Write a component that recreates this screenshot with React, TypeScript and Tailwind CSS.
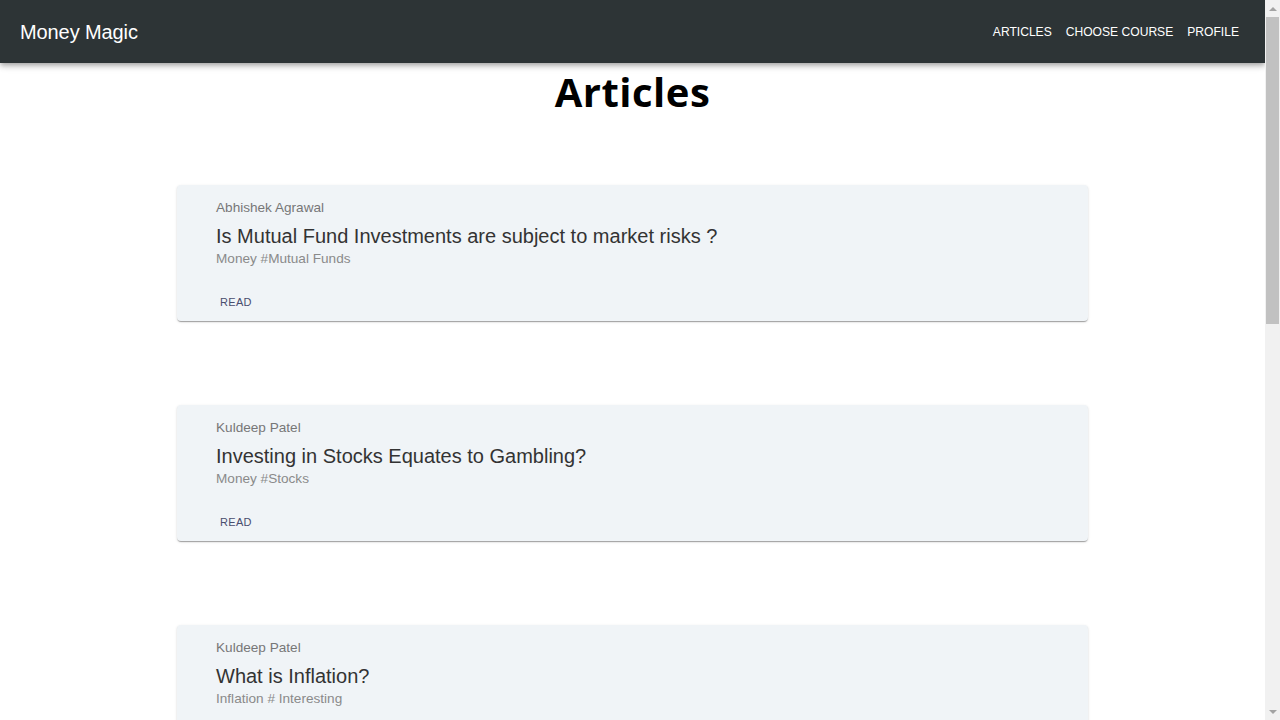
import React from 'react';

interface Article {
  id: number;
  author: string;
  title: string;
  tags: string;
}

const articles: Article[] = [
  { id: 1, author: 'Abhishek Agrawal', title: 'Is Mutual Fund Investments are subject to market risks ?', tags: 'Money #Mutual Funds' },
  { id: 2, author: 'Kuldeep Patel', title: 'Investing in Stocks Equates to Gambling?', tags: 'Money #Stocks' },
  { id: 3, author: 'Kuldeep Patel', title: 'What is Inflation?', tags: 'Inflation # Interesting' },
  { id: 4, author: 'Abhishek Agrawal', title: 'How to start saving money early?', tags: 'Money #Savings' },
  { id: 5, author: 'Kuldeep Patel', title: 'What is a Credit Score?', tags: 'Credit # Basics' },
  { id: 6, author: 'Abhishek Agrawal', title: 'Fixed Deposits vs Mutual Funds', tags: 'Money #Investing' },
];

function Navbar() {
  return (
    <header className="h-[63px] shrink-0 bg-[#2d3436] flex items-center justify-between pl-5 pr-[26px] shadow-[0_2px_4px_-1px_rgba(0,0,0,0.2),0_4px_5px_0_rgba(0,0,0,0.14),0_1px_10px_0_rgba(0,0,0,0.12)] relative z-10">
      <span className="text-[20px] text-white tracking-[-0.1px]">Money Magic</span>
      <nav className="flex items-center gap-[14px] pt-[2px] text-[12.1px] text-white">
        <a className="uppercase">Articles</a>
        <a className="uppercase">Choose Course</a>
        <a className="uppercase">Profile</a>
      </nav>
    </header>
  );
}

function ArticleCard({ article }: { article: Article }) {
  return (
    <div className="bg-[#f0f4f7] rounded-[4px] shadow-[0_2px_1px_-1px_rgba(0,0,0,0.2),0_1px_1px_0_rgba(0,0,0,0.14),0_1px_3px_0_rgba(0,0,0,0.12)] pl-[39px] pr-4 pt-[13px] pb-1">
      <div className="text-[13.6px] leading-[20px] text-[#777777]">{article.author}</div>
      <div className="mt-[5px] text-[20px] leading-[26px] text-[#333333]">{article.title}</div>
      <div className="text-[13.6px] leading-[20px] text-[#8a8a8a]">{article.tags}</div>
      <button className="mt-[18px] h-[30px] px-[4px] text-[11px] uppercase text-[#494d6e] tracking-[0.3px]">
        Read
      </button>
    </div>
  );
}

// stand-in for the browser's vertical scrollbar seen in the screenshot
function ScrollTrack() {
  return (
    <div className="w-[15px] shrink-0 bg-[#f1f1f1] flex flex-col items-center">
      <div className="h-[17px] flex items-center justify-center">
        <div className="w-0 h-0 border-l-[4px] border-r-[4px] border-b-[4px] border-l-transparent border-r-transparent border-b-[#a3a3a3]" />
      </div>
      <div className="w-[13px] h-[307px] bg-[#c1c1c1]" />
      <div className="flex-1" />
      <div className="h-[17px] flex items-center justify-center">
        <div className="w-0 h-0 border-l-[4px] border-r-[4px] border-t-[4px] border-l-transparent border-r-transparent border-t-[#a3a3a3]" />
      </div>
    </div>
  );
}

export default function App() {
  return (
    <div className="h-screen flex bg-white font-['Liberation_Sans',Arial,sans-serif]">
      <div className="flex-1 min-w-0 overflow-y-auto">
        <Navbar />
        <main className="w-[911px] mx-auto pb-24">
          <h1 className="text-center font-['Open_Sans',sans-serif] font-bold text-[40px] leading-[58px] text-black tracking-[0.5px]">
            Articles
          </h1>
          <div className="flex flex-col gap-[84px] mt-[64px]">
            {articles.map((a) => (
              <ArticleCard key={a.id} article={a} />
            ))}
          </div>
        </main>
      </div>
      <ScrollTrack />
    </div>
  );
}
